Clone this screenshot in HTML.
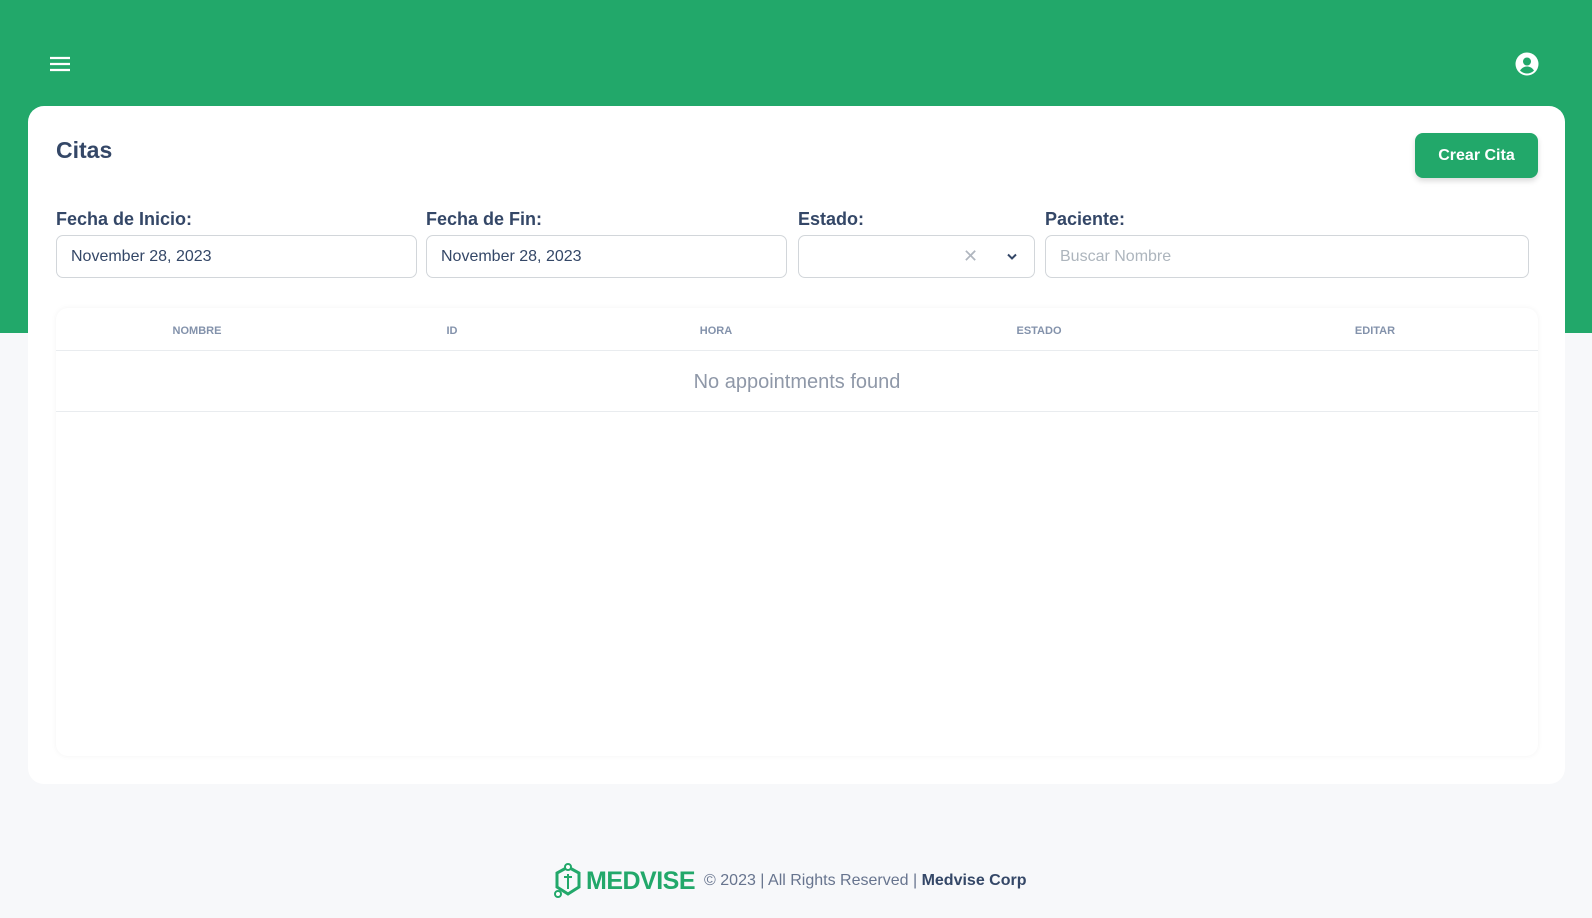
<!DOCTYPE html>
<html><head><meta charset="utf-8"><style>
*{box-sizing:border-box;margin:0;padding:0}
body{width:1592px;height:918px;background:#f7f8fa;font-family:"Liberation Sans",sans-serif;position:relative;overflow:hidden;color:#344767}
.hdr{position:absolute;left:0;top:0;width:1592px;height:333px;background:#22a86a}
.card{position:absolute;left:28px;top:106px;width:1537px;height:678px;background:#fff;border-radius:16px}
h1{position:absolute;left:28px;top:31px;font-size:23px;font-weight:bold;color:#344767}
.btn{position:absolute;left:1387px;top:27px;width:123px;height:45px;background:#22a86a;border-radius:8px;color:#fff;font-weight:bold;font-size:16px;display:flex;align-items:center;justify-content:center;box-shadow:0 3px 6px rgba(0,0,0,.15)}
.lbl{position:absolute;top:103px;font-size:18px;font-weight:bold;color:#344767}
.inp{position:absolute;top:129px;height:43px;border:1px solid #d2d6da;border-radius:7px;font-size:16px;padding:0 14px;display:flex;align-items:center;color:#344767}
.tbl{position:absolute;left:28px;top:202px;width:1482px;height:448px;border-radius:12px;box-shadow:0 0 6px rgba(0,0,0,.05);background:#fff}
.th{position:absolute;top:17px;font-size:11px;font-weight:bold;color:#8392ab;transform:translateX(-50%)}
.foot{position:absolute;top:863px;left:553px;display:flex;align-items:center;font-size:16px;color:#67748e}
</style></head><body>
<div class="hdr"></div>
<svg style="position:absolute;left:49px;top:56px" width="22" height="16"><path d="M1 2h20M1 8h20M1 14h20" stroke="#fff" stroke-width="2.2"/></svg>
<svg style="position:absolute;left:1515px;top:52px" width="24" height="24" viewBox="0 0 24 24"><circle cx="12" cy="12" r="11.5" fill="#fff"/><circle cx="12" cy="9.5" r="4" fill="#22a86a"/><path d="M5 18.5c2-3 4.5-4 7-4s5 1 7 4c-2 2-4.5 3-7 3s-5-1-7-3z" fill="#22a86a"/></svg>
<div class="card">
<h1>Citas</h1>
<div class="btn">Crear Cita</div>
<div class="lbl" style="left:28px">Fecha de Inicio:</div>
<div class="lbl" style="left:398px">Fecha de Fin:</div>
<div class="lbl" style="left:770px">Estado:</div>
<div class="lbl" style="left:1017px">Paciente:</div>
<div class="inp" style="left:28px;width:361px">November 28, 2023</div>
<div class="inp" style="left:398px;width:361px">November 28, 2023</div>
<div class="inp" style="left:770px;width:237px"><span style="position:absolute;left:164px;color:#b0b6bf;font-size:18px">✕</span><svg style="position:absolute;left:208px;top:17px" width="10" height="8"><path d="M1 1.5l4 4 4-4" stroke="#344767" stroke-width="2" fill="none"/></svg></div>
<div class="inp" style="left:1017px;width:484px;color:#adb5bd">Buscar Nombre</div>
<div class="tbl">
<div class="th" style="left:141px">NOMBRE</div>
<div class="th" style="left:396px">ID</div>
<div class="th" style="left:660px">HORA</div>
<div class="th" style="left:983px">ESTADO</div>
<div class="th" style="left:1319px">EDITAR</div>
<div style="position:absolute;left:0;right:0;top:42px;border-top:1px solid #e9ecef"></div>
<div style="position:absolute;left:0;right:0;top:63px;text-align:center;font-size:20px;color:#8f98a8">No appointments found</div>
<div style="position:absolute;left:0;right:0;top:103px;border-top:1px solid #e9ecef"></div>
</div>
</div>
<div class="foot">
<svg width="30" height="36" viewBox="0 0 30 36"><path d="M15 4l11 6v14l-11 7-11-7V10z" fill="none" stroke="#22a86a" stroke-width="3"/><circle cx="15" cy="4" r="3" fill="#fff" stroke="#22a86a" stroke-width="2"/><circle cx="5" cy="31" r="3" fill="#fff" stroke="#22a86a" stroke-width="2"/><path d="M15 11v15M11 14h8" stroke="#22a86a" stroke-width="2"/></svg>
<span style="font-size:25px;font-weight:bold;color:#22a86a;margin-left:3px;letter-spacing:-0.5px">MEDVISE</span>
<span style="margin-left:9px">© 2023 | All Rights Reserved | <b style="color:#344767">Medvise Corp</b></span>
</div>
</body></html>
